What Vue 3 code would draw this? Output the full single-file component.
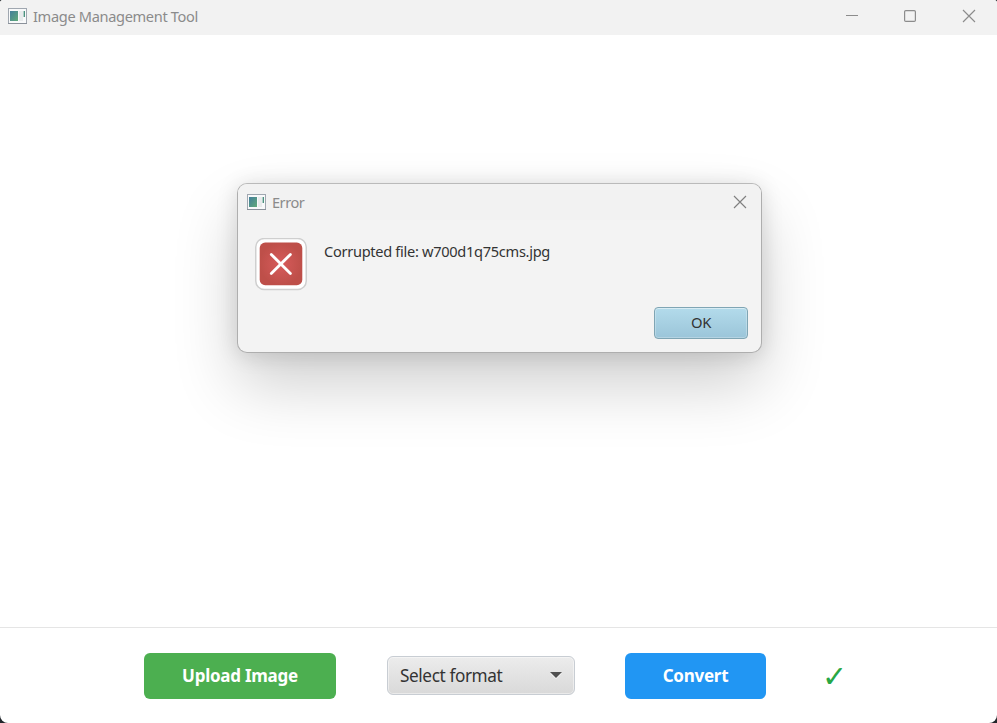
<script setup>
import { ref } from 'vue'

const format = ref('Select format')
const corruptedFile = ref('w700d1q75cms.jpg')
</script>

<template>
  <div class="backdrop">
    <div class="window">
      <header class="titlebar">
        <svg class="app-icon" width="19" height="16" viewBox="0 0 19 16">
          <rect x="0.5" y="0.5" width="18" height="15" fill="#f8f9fa" stroke="#a0a7b0" />
          <path d="M0 15.5H19" stroke="#8a919a" />
          <rect x="2" y="3" width="8" height="10" fill="url(#tile)" />
          <path d="M11 3H15V13H11Z" fill="#e8ebec" />
          <path d="M16.3 3V9" stroke="#4c927f" stroke-width="1.4" />
          <defs>
            <linearGradient id="tile" x1="0" y1="0" x2="1" y2="1">
              <stop offset="0" stop-color="#437e9b" />
              <stop offset="1" stop-color="#61aa79" />
            </linearGradient>
          </defs>
        </svg>
        <span class="title main-title">Image Management Tool</span>
        <div class="controls">
          <svg class="minimize" width="14" height="14" viewBox="0 0 14 14"><path d="M1 6.5H13" stroke="#8c8c8c" /></svg>
          <svg width="14" height="14" viewBox="0 0 14 14"><rect x="1.6" y="1.6" width="10.8" height="10.8" rx="1.2" fill="none" stroke="#8c8c8c" stroke-width="1.2" /></svg>
          <svg width="14" height="14" viewBox="0 0 14 14"><path d="M1 1L13 13M13 1L1 13" stroke="#8c8c8c" stroke-width="1.15" /></svg>
        </div>
      </header>

      <main class="canvas">
        <section class="dialog">
          <div class="dialog-bar">
            <svg class="app-icon" width="19" height="16" viewBox="0 0 19 16">
              <rect x="0.5" y="0.5" width="18" height="15" fill="#f8f9fa" stroke="#a0a7b0" />
              <path d="M0 15.5H19" stroke="#8a919a" />
              <rect x="2" y="3" width="8" height="10" fill="url(#tile)" />
              <path d="M11 3H15V13H11Z" fill="#e8ebec" />
              <path d="M16.3 3V9" stroke="#4c927f" stroke-width="1.4" />
            </svg>
            <span class="title error-title">Error</span>
            <svg class="dialog-close" width="14" height="14" viewBox="0 0 14 14"><path d="M1 1L13 13M13 1L1 13" stroke="#808080" stroke-width="1.15" /></svg>
          </div>
          <div class="dialog-body">
            <svg class="error-icon" width="52" height="53" viewBox="0 0 52 53">
              <defs>
                <radialGradient id="red">
                  <stop offset="0" stop-color="#d75b5b" />
                  <stop offset="1" stop-color="#be4f49" />
                </radialGradient>
              </defs>
              <rect x="0.75" y="0.5" width="50.5" height="51" rx="8.5" fill="#fff" stroke="#cfcfcf" stroke-width="1.5" />
              <rect x="4.7" y="4.6" width="42.6" height="42.6" rx="5.5" fill="url(#red)" />
              <path d="M16.3 16.4L35.4 35.5M35.4 16.4L16.3 35.5" stroke="#fff" stroke-width="2.8" stroke-linecap="round" />
            </svg>
            <p class="message">Corrupted file: {{ corruptedFile }}</p>
          </div>
          <div class="dialog-actions">
            <button class="ok"><span>OK</span></button>
          </div>
        </section>
      </main>

      <footer class="toolbar">
        <button class="action upload">Upload Image</button>
        <button class="select">
          <span>{{ format }}</span>
          <svg width="12" height="7" viewBox="0 0 12 7"><path d="M0 1.2H12L6 7Z" fill="#fff" opacity=".7" /><path d="M0 0H12L6 6Z" fill="#505050" /></svg>
        </button>
        <button class="action convert">Convert</button>
        <span class="status">✓</span>
      </footer>
    </div>
  </div>
</template>

<style>
body {
  margin: 0;
  overflow: hidden;
}
</style>

<style scoped>
.backdrop {
  width: 997px;
  height: 723px;
  background: #22262b;
  font-family: "Noto Sans", "Open Sans", sans-serif;
}
.window {
  height: 723px;
  display: flex;
  flex-direction: column;
  background: #fff;
  border-radius: 3px 3px 8px 8px;
  overflow: hidden;
}
.titlebar {
  height: 35px;
  flex: none;
  display: flex;
  align-items: flex-start;
  background: #f2f2f2;
  box-sizing: border-box;
  padding: 8px 21px 0 8px;
}
.title {
  color: #8b8b8b;
  font-size: 14.6px;
  line-height: 20px;
  white-space: nowrap;
}
.main-title {
  margin: -2px 0 0 6px;
  letter-spacing: -0.34px;
}
.controls {
  display: flex;
  gap: 45px;
  margin: 1px 0 0 auto;
}
.controls svg {
  display: block;
}
.controls .minimize {
  margin-right: -1px;
}
.canvas {
  height: 592px;
  flex: none;
  box-sizing: border-box;
  padding: 148px 0 0 237px;
}
.dialog {
  box-sizing: border-box;
  width: 525px;
  height: 170px;
  border: 1px solid #aeaeae;
  border-top-color: #bababa;
  border-radius: 10px;
  background: #f3f3f3;
  box-shadow: 0 32px 64px rgba(0, 0, 0, .19), 0 2px 21px rgba(0, 0, 0, .13);
  overflow: hidden;
}
.dialog-bar {
  height: 36px;
  box-sizing: border-box;
  display: flex;
  align-items: flex-start;
  padding: 10px 14px 0 9px;
  background: #f2f2f2;
}
.error-title {
  margin: -2px 0 0 6px;
  letter-spacing: -0.5px;
}
.dialog-close {
  margin: 1px 0 0 auto;
}
.dialog-body {
  height: 87px;
  display: flex;
  align-items: flex-start;
  gap: 17px;
  box-sizing: border-box;
  padding: 18px 0 0 17px;
}
.message {
  margin: 3px 0 0;
  font-size: 14.6px;
  line-height: 20px;
  letter-spacing: -0.3px;
  color: #333;
  white-space: nowrap;
}
.dialog-actions {
  display: flex;
  justify-content: flex-end;
  padding-right: 13px;
}
button {
  font-family: inherit;
  margin: 0;
  padding: 0;
}
.ok {
  width: 94px;
  height: 32px;
  border: 1px solid #7fa5b4;
  border-radius: 4px;
  background: linear-gradient(#b3dbeb, #9bc5d9);
  box-shadow: inset 0 0 0 1px rgba(255, 255, 255, .25), inset 0 1px 0 rgba(255, 255, 255, .3);
  font-size: 14.8px;
  letter-spacing: -0.4px;
  padding-bottom: 2px;
  color: #333;
}
.toolbar {
  height: 96px;
  flex: none;
  box-sizing: border-box;
  border-top: 1px solid #e5e5e5;
  display: flex;
  align-items: center;
  padding: 0 0 0 144px;
}
.action {
  height: 46px;
  border: 0;
  border-radius: 6px;
  color: #fff;
  font-size: 17px;
  font-weight: 700;
  letter-spacing: -0.25px;
  padding-bottom: 1px;
}
.upload {
  width: 192px;
  background: #4caf50;
}
.convert {
  width: 141px;
  margin-left: 50px;
  background: #2196f3;
}
.select {
  width: 188px;
  height: 39px;
  margin-left: 51px;
  box-sizing: border-box;
  border: 1.5px solid #c8cdd3;
  border-radius: 6px;
  background: linear-gradient(#ececec, #d9d9d9);
  box-shadow: inset 0 0 0 1px rgba(255, 255, 255, .45);
  display: flex;
  align-items: center;
  justify-content: space-between;
  padding: 0 12px 1px;
  font-size: 17.2px;
  letter-spacing: -0.4px;
  color: #333;
}
.status {
  margin: 2px 0 0 56px;
  color: #28a745;
  font-family: "DejaVu Sans", sans-serif;
  font-size: 30px;
  line-height: 30px;
}
</style>
